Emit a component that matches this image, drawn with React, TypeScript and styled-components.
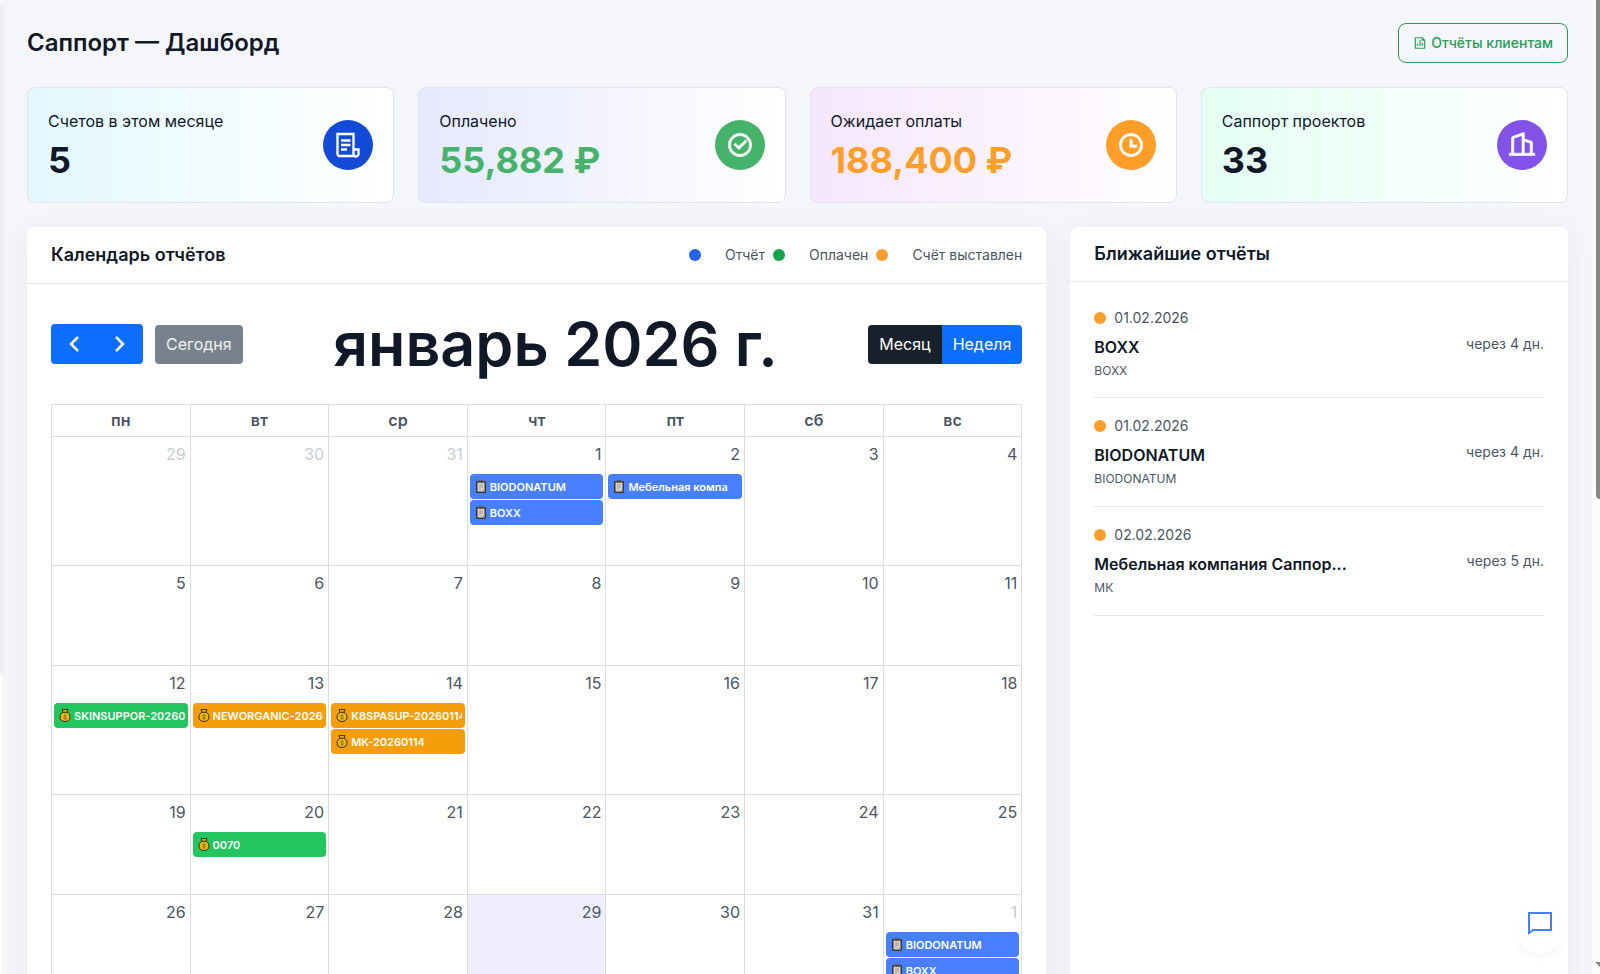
import React from "react";
import styled, { createGlobalStyle, css } from "styled-components";
import { RiCheckboxCircleLine, RiTimeLine, RiBuilding2Line, RiFileChartLine } from "react-icons/ri";

const GlobalStyle = createGlobalStyle`
  *, *::before, *::after { box-sizing: border-box; }
  body { margin: 0; background: #f5f6fa; color: #111827; font: 400 16px/24px Inter, sans-serif; }
  h1, h2, h3, p, ul { margin: 0; padding: 0; }
  button { font: inherit; cursor: pointer; }
`;

const Shell = styled.div`
  position: relative;
  height: 100vh;
  overflow: hidden;
  background: #f5f6fa;
`;

const MenuEdge = styled.div`
  position: absolute;
  left: 0;
  top: 0;
  width: 2px;
  height: 100%;
  padding-top: 4px;
  background: #fff;
  &::before {
    content: "";
    display: block;
    width: 2px;
    height: 69%;
    background: #eceef2;
    box-shadow: 0 0 4px rgba(15, 23, 42, 0.1);
  }
`;

const Content = styled.main`
  padding: 23px 32px 24px 27px;
`;

const PageHead = styled.header`
  display: flex;
  align-items: center;
  justify-content: space-between;
  margin-bottom: 24px;
`;

const PageTitle = styled.h1`
  font-size: 24px;
  line-height: 32px;
  font-weight: 600;
`;

const ReportsLink = styled.a`
  display: flex;
  align-items: center;
  gap: 4px;
  height: 40px;
  padding: 0 14px;
  border: 1px solid #2a9d55;
  border-radius: 8px;
  color: #2a9d55;
  font-size: 14px;
  font-weight: 500;
  text-decoration: none;
`;

const Stats = styled.section`
  display: grid;
  grid-template-columns: repeat(4, 1fr);
  gap: 24px;
  margin-bottom: 24px;
`;

const StatCard = styled.article<{ $tint: string }>`
  display: flex;
  align-items: center;
  justify-content: space-between;
  height: 116px;
  padding: 0 20px;
  border: 1px solid #e0e5ec;
  border-radius: 8px;
  background: linear-gradient(to right, ${(p) => p.$tint}, #fff);
`;

const StatLabel = styled.p`
  margin-bottom: 5px;
`;

const StatValue = styled.p<{ $color?: string }>`
  font-size: 36px;
  line-height: 44px;
  font-weight: 700;
  color: ${(p) => p.$color ?? "inherit"};
`;

const StatIcon = styled.span<{ $color: string }>`
  display: grid;
  place-items: center;
  width: 50px;
  height: 50px;
  border-radius: 50%;
  background: ${(p) => p.$color};
  color: #fff;
`;

const Columns = styled.div`
  display: grid;
  grid-template-columns: 1020fr 498fr;
  gap: 24px;
`;

const Panel = styled.section`
  min-width: 0;
  border-radius: 8px;
  background: #fff;
  box-shadow: 0 4px 30px rgba(46, 45, 116, 0.06);
`;

const PanelHead = styled.div<{ $height: number }>`
  display: flex;
  align-items: center;
  justify-content: space-between;
  height: ${(p) => p.$height}px;
  padding: 0 24px;
  border-bottom: 1px solid #e5e7eb;
`;

const PanelTitle = styled.h2`
  font-size: 18px;
  line-height: 24px;
  font-weight: 600;
`;

const Legend = styled.ul`
  display: flex;
  align-items: center;
  gap: 8px;
  list-style: none;
  font-size: 14px;
  color: #4b5563;
`;

const LegendItem = styled.li`
  display: flex;
  align-items: center;
  gap: 24px;
`;

const Dot = styled.span<{ $color: string }>`
  width: 12px;
  height: 12px;
  border-radius: 50%;
  background: ${(p) => p.$color};
`;

const CalendarBody = styled.div`
  padding: 24px;
`;

const Toolbar = styled.div`
  display: flex;
  align-items: center;
  justify-content: space-between;
  height: 72px;
  margin-bottom: 24px;
`;

const ToolGroup = styled.div`
  display: flex;
  align-items: center;
  gap: 12px;
`;

const ButtonRow = styled.div`
  display: flex;
  border-radius: 4px;
  overflow: hidden;
`;

const ToolButton = styled.button<{ $tone?: "dark" | "grey"; $icon?: boolean }>`
  display: grid;
  place-items: center;
  height: 39px;
  padding: 0 11px;
  border: 0;
  color: #fff;
  background: #0d6efd;
  ${(p) => p.$tone === "dark" && css`background: #18222d;`}
  ${(p) => p.$tone === "grey" && css`background: #78828d; color: #f1f2f4; border-radius: 4px;`}
  ${(p) => p.$icon && css`width: 46px; height: 40px; padding: 0;`}
`;

const MonthTitle = styled.h3`
  font-size: 61px;
  line-height: 72px;
  font-weight: 600;
  white-space: nowrap;
`;

const Grid = styled.table`
  width: 100%;
  table-layout: fixed;
  border-collapse: collapse;
  color: #4b5563;
`;

const DayName = styled.th`
  height: 32px;
  padding: 0 0 1px;
  border: 1px solid #ddd;
  font-weight: 600;
`;

const DayCell = styled.td<{ $today?: boolean }>`
  height: 100px;
  padding: 0 2px;
  border: 1px solid #ddd;
  vertical-align: top;
  background: ${(p) => (p.$today ? "#eeeefe" : "transparent")};
`;

const DayNumber = styled.div<{ $muted?: boolean }>`
  padding: 5px 2px 8px;
  text-align: right;
  color: ${(p) => (p.$muted ? "#c9ccd1" : "inherit")};
`;

const Events = styled.div<{ $roomy: boolean }>`
  display: grid;
  grid-template-columns: minmax(0, 1fr);
  gap: 1px;
  padding-bottom: ${(p) => (p.$roomy ? 40 : 0)}px;
`;

const eventColors = { report: "#487fff", paid: "#22c55e", billed: "#f59e0b" };
type EventKind = keyof typeof eventColors;

const EventLink = styled.a<{ $kind: EventKind }>`
  display: flex;
  align-items: center;
  gap: 3px;
  height: 25px;
  padding: 0 3px 0 5px;
  border-radius: 4px;
  background: ${(p) => eventColors[p.$kind]};
  color: #fff;
  font-size: 11px;
  font-weight: 600;
  text-decoration: none;
  svg { flex: none; }
`;

const EventText = styled.span`
  min-width: 0;
  overflow: hidden;
  white-space: nowrap;
`;

const ReportList = styled.ul`
  list-style: none;
  padding: 24px;
`;

const ReportItem = styled.li`
  display: flex;
  align-items: center;
  justify-content: space-between;
  height: 109px;
  border-bottom: 1px solid #e5e7eb;
  &:first-child { height: 92px; padding-bottom: 16px; }
`;

const ReportDate = styled.p`
  display: flex;
  align-items: center;
  gap: 8px;
  font-size: 14px;
  line-height: 24px;
  color: #4b5563;
`;

const ReportName = styled.h3`
  width: 254px;
  margin-top: 4px;
  font-size: 16px;
  line-height: 26px;
  font-weight: 600;
  white-space: nowrap;
  overflow: hidden;
  text-overflow: ellipsis;
`;

const ReportCode = styled.p`
  font-size: 12px;
  line-height: 22px;
  color: #4b5563;
`;

const ReportDue = styled.span`
  font-size: 14px;
  color: #4b5563;
`;

const ChatButton = styled.button`
  position: absolute;
  right: 36px;
  bottom: 20px;
  width: 48px;
  height: 48px;
  display: flex;
  justify-content: center;
  padding: 5px 0 0;
  border: 0;
  border-radius: 50%;
  background: #fff;
  box-shadow: 0 3px 6px rgba(0, 0, 0, 0.04);
`;

const ScrollTrack = styled.div`
  position: absolute;
  top: 0;
  right: 0;
  width: 8px;
  height: 100%;
  display: flex;
  flex-direction: column;
  align-items: flex-end;
  justify-content: space-between;
  background: #fafbfc;
`;

const ScrollThumb = styled.span`
  width: 4px;
  height: 499px;
  border-bottom-left-radius: 4px;
  background: #858789;
`;

const ScrollArrow = styled.svg`
  margin-bottom: 6px;
`;

const BillIcon = () => (
  <svg width="26" height="26" viewBox="0 0 26 26" fill="none" stroke="currentColor" strokeWidth="2.300" aria-hidden="true">
    <path d="M20.500 24H4.500a2 2 0 0 1-2-2V2h16v20a2 2 0 0 0 5 0v-4.500h-5" />
    <path d="M6 8.500h9.500M6 13h9.500M6 17.500h6" />
  </svg>
);

const ClipboardIcon = () => (
  <svg width="12" height="13" viewBox="0 0 12 13" aria-hidden="true">
    <rect x="1" y="1" width="10" height="12" rx="1" fill="#3b3532" />
    <rect x="2.500" y="2.500" width="7" height="9" fill="#ddd5cc" />
    <rect x="3.500" y="0" width="5" height="3" rx="1" fill="#5e5854" />
    <path d="M4 5h4M4 7h4M4 9h2" stroke="#8d8883" strokeWidth="0.8" />
    <path d="M6.500 11.500 9.500 8.500v3z" fill="#a09a94" />
  </svg>
);

const MoneyIcon = () => (
  <svg width="12" height="13" viewBox="0 0 12 13" aria-hidden="true">
    <path d="M3 .6h6L8 3.200C10.200 4.300 11 6.300 11 8.200c0 2.800-2.100 4.300-5 4.300s-5-1.500-5-4.300c0-1.900.8-3.900 3-5z" fill="#e8b512" stroke="#3d2d0a" strokeWidth="1" />
    <path d="M3.900 3.300h4.200" stroke="#3d2d0a" strokeWidth="1" />
    <path d="M7.500 6.500c-.4-.6-2.900-.8-2.900.4 0 1.300 3 .6 3 1.900 0 1.200-2.600 1.100-3.100.3M6 5v6" fill="none" stroke="#8a6a0c" strokeWidth="0.7" />
  </svg>
);

const Chevron = ({ dir }: { dir: "left" | "right" }) => (
  <svg width="24" height="24" viewBox="0 0 24 24" fill="none" stroke="currentColor" strokeWidth="2.500" aria-hidden="true">
    <path d={dir === "left" ? "M16 5 9 12l7 7" : "M8 5l7 7-7 7"} />
  </svg>
);

const stats = [
  { label: "Счетов в этом месяце", value: "5", tint: "#e3f9ff", icon: <BillIcon />, iconColor: "#144bd6" },
  { label: "Оплачено", value: "55,882 ₽", tint: "#e6e9ff", color: "#45b369", icon: <RiCheckboxCircleLine size={28} stroke="currentColor" strokeWidth={0.5} />, iconColor: "#45b369" },
  { label: "Ожидает оплаты", value: "188,400 ₽", tint: "#f6e6ff", color: "#ff9f29", icon: <RiTimeLine size={28} stroke="currentColor" strokeWidth={0.5} />, iconColor: "#ff9f29" },
  { label: "Саппорт проектов", value: "33", tint: "#e4fff4", icon: <RiBuilding2Line size={28} stroke="currentColor" strokeWidth={0.5} />, iconColor: "#8252e9" },
];

const legend = [
  { label: "Отчёт", color: "#2563eb" },
  { label: "Оплачен", color: "#16a34a" },
  { label: "Счёт выставлен", color: "#ff9f29" },
];

const dayNames = ["пн", "вт", "ср", "чт", "пт", "сб", "вс"];

interface CalendarEvent { kind: EventKind; text: string }
interface Day { n: number; muted?: boolean; today?: boolean; events?: CalendarEvent[] }

const report = (text: string): CalendarEvent => ({ kind: "report", text });
const paid = (text: string): CalendarEvent => ({ kind: "paid", text });
const billed = (text: string): CalendarEvent => ({ kind: "billed", text });

const weeks: Day[][] = [
  [
    { n: 29, muted: true }, { n: 30, muted: true }, { n: 31, muted: true },
    { n: 1, events: [report("BIODONATUM"), report("BOXX")] },
    { n: 2, events: [report("Мебельная компа")] },
    { n: 3 }, { n: 4 },
  ],
  [5, 6, 7, 8, 9, 10, 11].map((n) => ({ n })),
  [
    { n: 12, events: [paid("SKINSUPPOR-20260112")] },
    { n: 13, events: [billed("NEWORGANIC-20260113")] },
    { n: 14, events: [billed("K8SPASUP-20260114"), billed("MK-20260114")] },
    { n: 15 }, { n: 16 }, { n: 17 }, { n: 18 },
  ],
  [{ n: 19 }, { n: 20, events: [paid("0070")] }, { n: 21 }, { n: 22 }, { n: 23 }, { n: 24 }, { n: 25 }],
  [
    { n: 26 }, { n: 27 }, { n: 28 }, { n: 29, today: true }, { n: 30 }, { n: 31 },
    { n: 1, muted: true, events: [report("BIODONATUM"), report("BOXX")] },
  ],
];

const upcoming = [
  { date: "01.02.2026", name: "BOXX", code: "BOXX", due: "через 4 дн." },
  { date: "01.02.2026", name: "BIODONATUM", code: "BIODONATUM", due: "через 4 дн." },
  { date: "02.02.2026", name: "Мебельная компания Саппор...", code: "МК", due: "через 5 дн." },
];

export default function App() {
  return (
    <Shell>
      <GlobalStyle />
      <MenuEdge />
      <Content>
        <PageHead>
          <PageTitle>Саппорт — Дашборд</PageTitle>
          <ReportsLink href="#reports"><RiFileChartLine size={14} />Отчёты клиентам</ReportsLink>
        </PageHead>

        <Stats>
          {stats.map((s) => (
            <StatCard key={s.label} $tint={s.tint}>
              <div>
                <StatLabel>{s.label}</StatLabel>
                <StatValue $color={s.color}>{s.value}</StatValue>
              </div>
              <StatIcon $color={s.iconColor}>{s.icon}</StatIcon>
            </StatCard>
          ))}
        </Stats>

        <Columns>
          <Panel>
            <PanelHead $height={57}>
              <PanelTitle>Календарь отчётов</PanelTitle>
              <Legend>
                {legend.map((l) => (
                  <LegendItem key={l.label}><Dot $color={l.color} />{l.label}</LegendItem>
                ))}
              </Legend>
            </PanelHead>
            <CalendarBody>
              <Toolbar>
                <ToolGroup>
                  <ButtonRow>
                    <ToolButton $icon aria-label="Назад"><Chevron dir="left" /></ToolButton>
                    <ToolButton $icon aria-label="Вперёд"><Chevron dir="right" /></ToolButton>
                  </ButtonRow>
                  <ToolButton $tone="grey">Сегодня</ToolButton>
                </ToolGroup>
                <MonthTitle>январь 2026 г.</MonthTitle>
                <ButtonRow>
                  <ToolButton $tone="dark">Месяц</ToolButton>
                  <ToolButton>Неделя</ToolButton>
                </ButtonRow>
              </Toolbar>
              <Grid>
                <thead>
                  <tr>{dayNames.map((d) => <DayName key={d} scope="col">{d}</DayName>)}</tr>
                </thead>
                <tbody>
                  {weeks.map((week, i) => (
                    <tr key={i}>
                      {week.map((day, j) => (
                        <DayCell key={j} $today={day.today}>
                          <DayNumber $muted={day.muted}>{day.n}</DayNumber>
                          {day.events && (
                            <Events $roomy={day.events.length > 1}>
                              {day.events.map((e) => (
                                <EventLink key={e.text} href="#event" $kind={e.kind}>
                                  {e.kind === "report" ? <ClipboardIcon /> : <MoneyIcon />}
                                  <EventText>{e.text}</EventText>
                                </EventLink>
                              ))}
                            </Events>
                          )}
                        </DayCell>
                      ))}
                    </tr>
                  ))}
                </tbody>
              </Grid>
            </CalendarBody>
          </Panel>

          <Panel>
            <PanelHead $height={55}>
              <PanelTitle>Ближайшие отчёты</PanelTitle>
            </PanelHead>
            <ReportList>
              {upcoming.map((r) => (
                <ReportItem key={r.name}>
                  <div>
                    <ReportDate><Dot $color="#ff9f29" />{r.date}</ReportDate>
                    <ReportName>{r.name}</ReportName>
                    <ReportCode>{r.code}</ReportCode>
                  </div>
                  <ReportDue>{r.due}</ReportDue>
                </ReportItem>
              ))}
            </ReportList>
          </Panel>
        </Columns>
      </Content>

      <ChatButton aria-label="Открыть чат">
        <svg width="24" height="24" viewBox="0 0 24 24" fill="none" stroke="#487fff" strokeWidth="2" aria-hidden="true">
          <path d="M1 2h22v17H5l-4 3z" />
        </svg>
      </ChatButton>
      <ScrollTrack>
        <ScrollThumb />
        <ScrollArrow width="5" height="6" viewBox="0 0 5 6" aria-hidden="true">
          <path d="M0 0h5v5z" fill="#858789" />
        </ScrollArrow>
      </ScrollTrack>
    </Shell>
  );
}
